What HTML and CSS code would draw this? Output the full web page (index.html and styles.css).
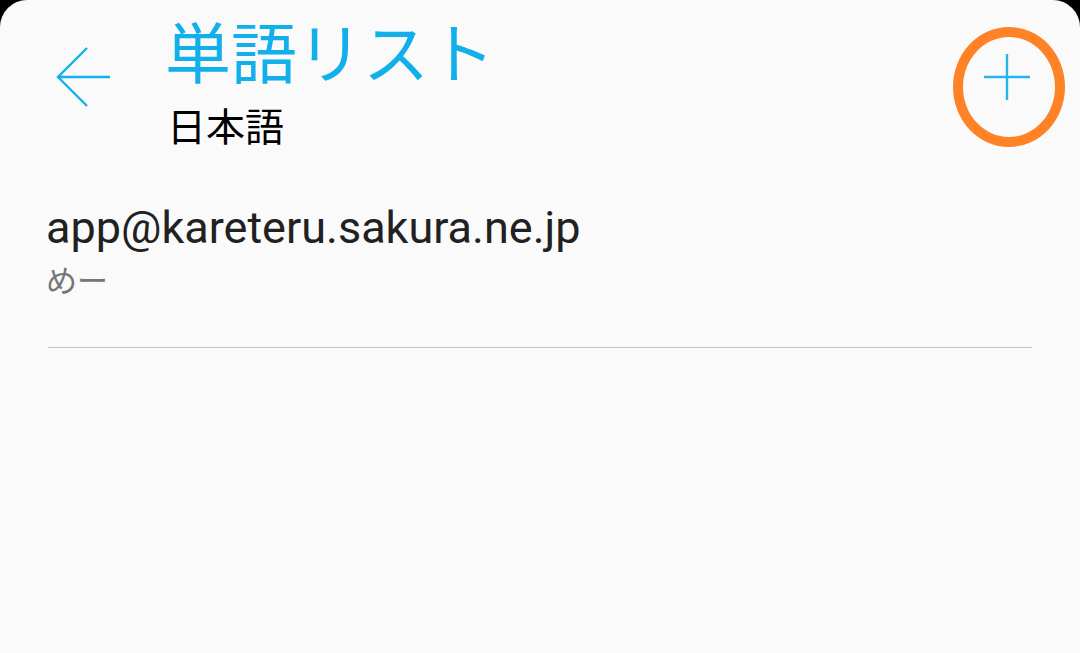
FILE: index.html
```html
<!DOCTYPE html>
<html lang="ja">
<head>
<meta charset="utf-8">
<link rel="stylesheet" href="styles.css">
</head>
<body>
<div class="screen">
  <header class="toolbar">
    <button class="back" aria-label="back">
      <svg width="64" height="64" viewBox="0 0 64 64">
        <path d="M59 31H7M36 2L7 31l29 29" fill="none" stroke="#14b0ea" stroke-width="2.4"/>
      </svg>
    </button>
    <div class="titles">
      <div class="title">単語リスト</div>
      <div class="subtitle">日本語</div>
    </div>
    <button class="add" aria-label="add">
      <svg width="50" height="50" viewBox="0 0 50 50">
        <path d="M25 2v46M2 25h46" fill="none" stroke="#26b4ee" stroke-width="2.4"/>
      </svg>
      <span class="ring"></span>
    </button>
  </header>
  <ul class="list">
    <li class="item">
      <div class="primary">app@kareteru.sakura.ne.jp</div>
      <div class="secondary">めー</div>
    </li>
  </ul>
</div>
</body>
</html>
```

FILE: styles.css
```css
html, body {
  margin: 0;
  padding: 0;
  background: #000;
}
.screen {
  width: 1080px;
  height: 653px;
  background: #fafafa;
  border-radius: 27px 27px 0 0;
  overflow: hidden;
  font-family: "Noto Sans CJK JP", "Roboto", sans-serif;
}
.toolbar {
  display: flex;
  align-items: flex-start;
  height: 170px;
}
button {
  background: none;
  border: 0;
  padding: 0;
  margin: 0;
}
.back {
  margin: 46px 0 0 51px;
  width: 64px;
  height: 64px;
}
.back svg { display: block; }
.titles {
  margin-left: 50px;
  flex: 1;
}
.title {
  color: #11b0ea;
  font-size: 66px;
  line-height: 1;
  margin-top: 16px;
  white-space: nowrap;
}
.subtitle {
  color: #000;
  font-size: 39px;
  line-height: 1;
  margin-top: 23px;
  margin-left: 2px;
}
.add {
  position: relative;
  width: 50px;
  height: 50px;
  margin: 52px 48px 0 0;
}
.add svg { display: block; }
.ring {
  position: absolute;
  left: -29px;
  top: -25px;
  width: 92px;
  height: 100px;
  border: 10px solid #ff8326;
  border-radius: 50%;
}
.list {
  list-style: none;
  margin: 0;
  padding: 0 48px;
}
.item {
  border-bottom: 1.5px solid #c4c4c4;
  padding-bottom: 53px;
}
.primary {
  font-family: "Roboto", sans-serif;
  font-size: 45px;
  color: #212121;
  line-height: 1;
  margin-top: 35px;
  margin-left: -2px;
  white-space: nowrap;
}
.secondary {
  font-family: "Noto Sans CJK JP", sans-serif;
  font-size: 31px;
  color: #757575;
  line-height: 1;
  margin-top: 13px;
  margin-left: -2px;
}
```
